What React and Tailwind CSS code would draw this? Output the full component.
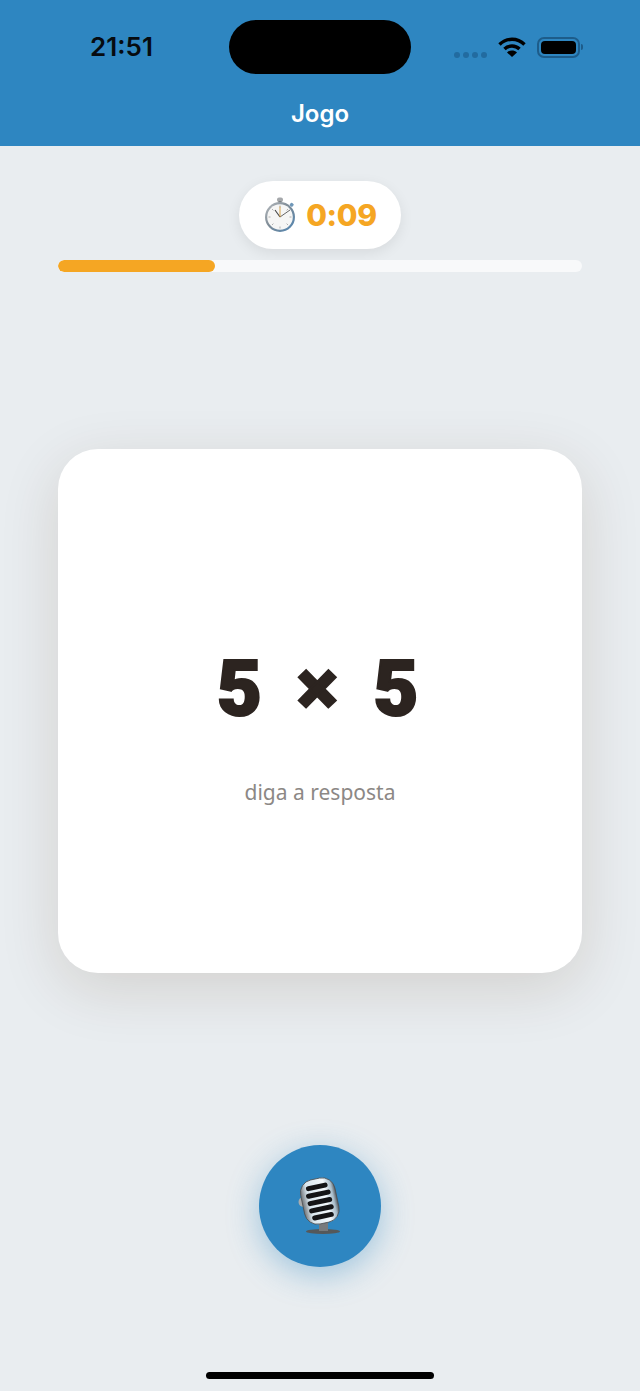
import React from 'react';

const StopwatchIcon = () => (
  <svg width="34" height="36" viewBox="0 0 34 36">
    <defs>
      <linearGradient id="ring" x1="0" y1="0" x2="1" y2="1">
        <stop offset="0" stopColor="#b9bdc1" />
        <stop offset="0.45" stopColor="#7d8a95" />
        <stop offset="1" stopColor="#4f86b5" />
      </linearGradient>
    </defs>
    <rect x="14" y="0.5" width="6" height="4.5" rx="2" fill="#a5a8ab" />
    <rect x="15.5" y="4" width="3" height="3" fill="#7f8386" />
    <rect x="27" y="6" width="3.5" height="3.5" rx="1" fill="#6f97b8" transform="rotate(40 28.7 7.7)" />
    <circle cx="17" cy="20" r="15" fill="url(#ring)" />
    <circle cx="17" cy="20" r="12.8" fill="#f6f6f5" />
    <g stroke="#b0b0b0" strokeWidth="1">
      <path d="M17 8.5v2M17 29.5v2M5.5 20h2M26.5 20h2M9 12l1.4 1.4M23.6 26.6l1.4 1.4M25 12l-1.4 1.4M10.4 26.6L9 28" />
    </g>
    <path d="M17 20L27 13" stroke="#555" strokeWidth="0.9" />
    <path d="M17 20L12 13" stroke="#444" strokeWidth="1.1" />
    <path d="M17 20V9.5" stroke="#d39a3a" strokeWidth="0.9" />
  </svg>
);

const MicIcon = () => (
  <svg width="44" height="60" viewBox="0 0 44 60">
    <defs>
      <linearGradient id="metal" x1="0" y1="0" x2="1" y2="0">
        <stop offset="0" stopColor="#6f7377" />
        <stop offset="0.2" stopColor="#d9e6ee" />
        <stop offset="0.7" stopColor="#f4f9fc" />
        <stop offset="0.9" stopColor="#a8bcc9" />
        <stop offset="1" stopColor="#55595d" />
      </linearGradient>
    </defs>
    <ellipse cx="25" cy="55.5" rx="17" ry="2.4" fill="#55585a" />
    <rect x="21" y="46" width="9" height="9" fill="#777a7d" />
    <circle cx="5.5" cy="26" r="5" fill="#a9acae" />
    <g transform="rotate(-12 22 26)">
      <rect x="4.5" y="2.5" width="35" height="45" rx="13" fill="url(#metal)" stroke="#4d5054" strokeWidth="0.8" />
      <g fill="#141416">
        <rect x="11" y="8" width="22" height="5" rx="2.5" />
        <rect x="9.5" y="15.5" width="25" height="5" rx="2.5" />
        <rect x="9.5" y="23" width="25" height="5" rx="2.5" />
        <rect x="9.5" y="30.5" width="25" height="5" rx="2.5" />
        <rect x="11" y="38" width="22" height="5" rx="2.5" />
      </g>
    </g>
  </svg>
);

const StatusBar = () => (
  <div className="flex h-[54px] items-center">
    <div className="w-[229px] pl-[14px] text-center font-['Inter',sans-serif] text-[26px] font-semibold leading-none text-[#060b10]">
      21:51
    </div>
    <div className="h-[54px] w-[182px] rounded-[27px] bg-black"></div>
    <div className="flex items-center pl-[43px]">
      <div className="mt-[15px] flex gap-[3px]">
        {[0, 1, 2, 3].map((dot) => (
          <span key={dot} className="h-[6px] w-[6px] rounded-full bg-[#226ba0]"></span>
        ))}
      </div>
      <svg className="ml-[11px]" width="28" height="20" viewBox="0 0 28 20" fill="none" stroke="#000">
        <path d="M1.5 7.5C8.5 .5 19.5 .5 26.5 7.5" strokeWidth="3.4" />
        <path d="M6.5 12C10.5 8 17.5 8 21.5 12" strokeWidth="3.4" />
        <path d="M14 20l-5-4.6c3-2.4 7-2.4 10 0z" fill="#000" stroke="none" />
      </svg>
      <div className="ml-[11px] flex items-center">
        <div className="h-[21px] w-[43px] rounded-[7px] border-2 border-[#1d5c8a] p-[2px]">
          <div className="h-full w-full rounded-[4px] bg-black"></div>
        </div>
        <div className="ml-[1px] h-[6px] w-[2px] rounded-r-full bg-[#1d5c8a]"></div>
      </div>
    </div>
  </div>
);

export default function App() {
  return (
    <div className="relative flex h-[1391px] flex-col bg-[#e9edf0]">
      <header className="h-[146px] bg-[#2e86c1] pt-[20px]">
        <StatusBar />
        <h1 className="mt-[26px] text-center font-['Inter',sans-serif] text-[24px] font-semibold leading-[28px] text-white">
          Jogo
        </h1>
      </header>

      <main className="flex flex-1 flex-col px-[58px]">
        <div className="mt-[35px] flex justify-center">
          <div className="flex h-[68px] w-[162px] items-center justify-center gap-[9px] rounded-[34px] bg-white shadow-[0_4px_14px_rgba(0,0,0,0.08)]">
            <StopwatchIcon />
            <span className="font-['Inter',sans-serif] text-[30px] font-extrabold leading-none tracking-[-0.3px] text-[#f5a623]">0:09</span>
          </div>
        </div>

        <div className="mt-[11px] h-[12px] overflow-hidden rounded-full bg-[#f8f9fa]">
          <div className="h-full w-[30%] rounded-full bg-[#f5a623]"></div>
        </div>

        <div className="mt-[177px] flex h-[524px] flex-col items-center rounded-[40px] bg-white pt-[198px] shadow-[0_16px_60px_rgba(80,45,10,0.14)]">
          <div className="flex h-[84px] items-center gap-[35px] pr-[5px] font-['Roboto',sans-serif] text-[78px] font-black leading-none text-[#2c2420] [-webkit-text-stroke:2px_#2c2420]">
            <span>5</span>
            <span>×</span>
            <span>5</span>
          </div>
          <p className="mt-[47px] font-['Noto_Sans',sans-serif] text-[21px] leading-[28px] text-[#8c8885]">
            diga a resposta
          </p>
        </div>

        <div className="mt-[172px] flex justify-center">
          <button className="flex h-[122px] w-[122px] items-center justify-center rounded-full bg-[#2e86c1] shadow-[0_8px_32px_rgba(46,134,193,0.4)]">
            <MicIcon />
          </button>
        </div>
      </main>

      <div className="absolute bottom-[12px] left-[206px] h-[7px] w-[228px] rounded-full bg-black"></div>
    </div>
  );
}
